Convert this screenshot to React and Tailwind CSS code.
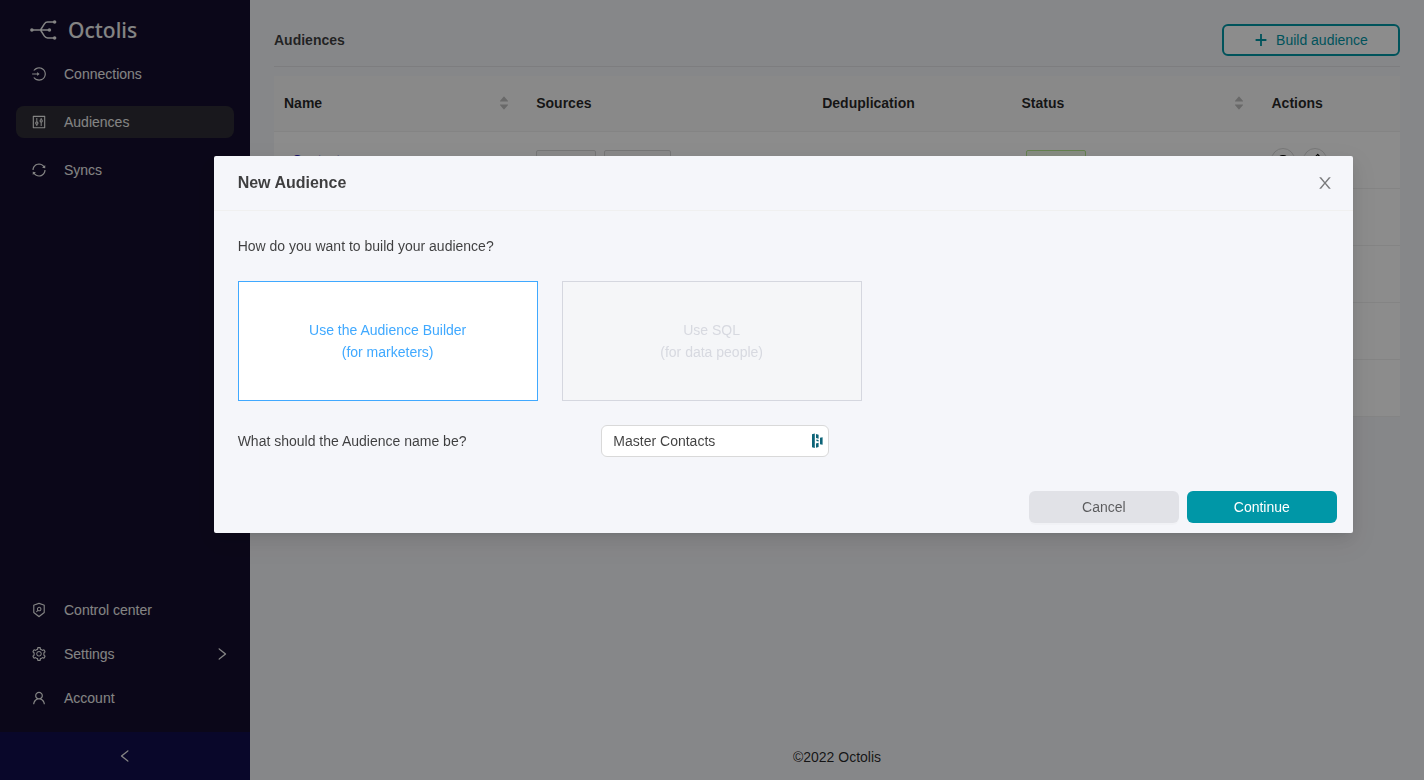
import React, { useState } from 'react';
import {
  AiFillCaretDown,
  AiFillCaretUp,
  AiOutlineControl,
  AiOutlineEdit,
  AiOutlineEye,
  AiOutlineLeft,
  AiOutlineLogin,
  AiOutlineRight,
  AiOutlineSecurityScan,
  AiOutlineSetting,
  AiOutlineSync,
  AiOutlineUser,
} from 'react-icons/ai';

const mainNav = [
  { label: 'Connections', icon: AiOutlineLogin },
  { label: 'Audiences', icon: AiOutlineControl, active: true },
  { label: 'Syncs', icon: AiOutlineSync },
];

const bottomNav = [
  { label: 'Control center', icon: AiOutlineSecurityScan },
  { label: 'Settings', icon: AiOutlineSetting, expandable: true },
  { label: 'Account', icon: AiOutlineUser },
];

const columns = [
  { title: 'Name', sortable: true, width: 'w-[22.4%]' },
  { title: 'Sources', width: 'w-[25.4%]' },
  { title: 'Deduplication', width: 'w-[17.7%]' },
  { title: 'Status', sortable: true, width: 'w-[22.2%]' },
  { title: 'Actions', width: 'w-[12.3%]' },
];

const Logo = () => (
  <div className="flex items-center gap-2.5 px-[30px] pt-3.5 text-[#f0f0f0]">
    <svg className="h-5 w-7" viewBox="0 0 28 20" fill="none" stroke="currentColor" strokeWidth="1.5" aria-hidden="true">
      <path d="M2 10H19M10.5 10L14.4 3.8Q15.6 2 17.6 2H25M10.5 10L14.4 16.2Q15.6 18 17.6 18H25" />
      <g fill="currentColor" stroke="none">
        <circle cx="1.9" cy="10" r="1.8" />
        <circle cx="19.4" cy="10" r="1.8" />
        <circle cx="24.6" cy="2" r="1.8" />
        <circle cx="24.6" cy="18" r="1.8" />
      </g>
    </svg>
    <span className="font-['Noto_Sans',sans-serif] text-[21px] leading-8 font-medium">Octolis</span>
  </div>
);

const NavItem = ({ label, icon: Icon, active = false, expandable = false }) => (
  <a
    href="#"
    className={`flex h-8 items-center gap-[17px] rounded-lg px-[15px] text-sm text-[#f0f0f0] ${active ? 'bg-[#2e2d35]' : ''}`}
  >
    <Icon className="size-4" aria-hidden="true" />
    <span className="flex-1">{label}</span>
    {expandable && <AiOutlineRight className="-mr-[11px] size-4" aria-hidden="true" />}
  </a>
);

const Sidebar = () => (
  <aside className="flex w-[250px] shrink-0 flex-col bg-[#150e2e]">
    <Logo />
    <nav className="mt-3 flex flex-1 flex-col gap-4 px-4">
      {mainNav.map((item) => (
        <NavItem key={item.label} {...item} />
      ))}
    </nav>
    <nav className="mb-[18px] flex flex-col gap-3 px-4">
      {bottomNav.map((item) => (
        <NavItem key={item.label} {...item} />
      ))}
    </nav>
    <button type="button" aria-label="Collapse menu" className="flex h-12 items-center justify-center bg-[#120d4d] text-[#f0f0f0]">
      <AiOutlineLeft className="size-4" />
    </button>
  </aside>
);

const PlusIcon = () => (
  <svg className="size-3.5" viewBox="0 0 14 14" stroke="currentColor" strokeWidth="1.8" aria-hidden="true">
    <path d="M7 1V13M1.6 7H12.4" />
  </svg>
);

const CloseIcon = () => (
  <svg className="size-4" viewBox="64 64 896 896" fill="currentColor" aria-hidden="true">
    <path d="M563.8 512l262.5-312.9c4.4-5.2.7-13.1-6.1-13.1h-79.8c-4.7 0-9.2 2.1-12.3 5.7L511.6 449.8 295.1 191.7c-3-3.6-7.5-5.7-12.3-5.7H203c-6.8 0-10.5 7.9-6.1 13.1L459.4 512 196.9 824.9A7.95 7.95 0 0 0 203 838h79.8c4.7 0 9.2-2.1 12.3-5.7l216.5-258.1 216.5 258.1c3 3.6 7.5 5.7 12.3 5.7h79.8c6.8 0 10.5-7.9 6.1-13.1L563.8 512z" />
  </svg>
);

const Sorter = () => (
  <span className="mr-1.5 flex flex-col text-[#bfbfbf]">
    <AiFillCaretUp className="size-3" />
    <AiFillCaretDown className="-mt-1 size-3" />
  </span>
);

const AudienceTable = () => (
  <table className="mt-[9px] w-full table-fixed bg-white text-sm">
    <thead>
      <tr className="h-[55px] border-b border-[#f0f0f0] bg-[#fafafa]">
        {columns.map(({ title, sortable, width }) => (
          <th key={title} className={`px-2.5 text-left font-bold text-black/85 ${width}`}>
            {sortable ? (
              <button type="button" className="flex w-full items-center justify-between">
                {title}
                <Sorter />
              </button>
            ) : (
              title
            )}
          </th>
        ))}
      </tr>
    </thead>
    <tbody>
      <tr className="h-[57px] border-b border-[#f0f0f0]">
        <td className="px-2.5">
          <a href="#" className="pl-2 text-[#2a22b8]">Contacts</a>
        </td>
        <td className="px-2.5">
          <div className="flex gap-2">
            <span className="h-5 w-[60px] rounded-xs border border-[#d9d9d9] bg-[#fafafa]" />
            <span className="h-5 w-[67px] rounded-xs border border-[#d9d9d9] bg-[#fafafa]" />
          </div>
        </td>
        <td />
        <td className="px-2.5">
          <div className="ml-1 h-5 w-[60px] rounded-xs border border-[#b7eb8f] bg-[#f6ffed]" />
        </td>
        <td className="px-2.5">
          <div className="flex gap-2">
            <button type="button" aria-label="View" className="flex size-6 items-center justify-center rounded-full border border-[#d9d9d9]">
              <AiOutlineEye className="size-4" />
            </button>
            <button type="button" aria-label="Edit" className="flex size-6 items-center justify-center rounded-full border border-[#d9d9d9]">
              <AiOutlineEdit className="size-4" />
            </button>
          </div>
        </td>
      </tr>
      {[1, 2, 3, 4].map((row) => (
        <tr key={row} className="h-[57px] border-b border-[#f0f0f0]">
          <td colSpan={5} />
        </tr>
      ))}
    </tbody>
  </table>
);

const PasswordManagerIcon = () => (
  <svg className="pointer-events-none absolute top-2 right-1.5 h-4 w-3" viewBox="0 0 12 16" fill="#0e6478" aria-hidden="true">
    <path d="M1 1.2L3.8 0.4V15L1 14.2ZM5 1L7.6 1.7V5.8L5 5ZM5.4 6.4L7.6 7V8.4L5.4 8ZM5 10.4L7.6 9.8V14L5 14.8ZM9 4.8L11.6 4.2V11.8L9 11.2Z" />
  </svg>
);

const NewAudienceModal = () => {
  const [name, setName] = useState('Master Contacts');

  return (
    <div className="fixed inset-0 flex items-start justify-end bg-black/45 pt-[20vh] pr-[5vw]">
      <div
        role="dialog"
        aria-labelledby="modal-title"
        className="w-[80vw] rounded-xs bg-[#f5f6fa] text-sm leading-[22px] text-black/75 shadow-[0_3px_6px_-4px_rgba(0,0,0,0.12),0_6px_16px_0_rgba(0,0,0,0.08),0_9px_28px_8px_rgba(0,0,0,0.05)]"
      >
        <header className="flex items-center justify-between border-b border-[#f0f0f0] px-6 py-4">
          <h2 id="modal-title" className="text-base leading-[22px] font-bold">New Audience</h2>
          <button type="button" aria-label="Close" className="-mr-1 text-black/50">
            <CloseIcon />
          </button>
        </header>

        <div className="flex flex-col gap-6 p-6">
          <p>How do you want to build your audience?</p>
          <div className="flex gap-6">
            <button type="button" className="h-[120px] w-[300px] border border-[#40a9ff] bg-white text-[#40a9ff]">
              Use the Audience Builder
              <br />
              (for marketers)
            </button>
            <button type="button" disabled className="h-[120px] w-[300px] border border-[#d5d7df] bg-[#f5f6f8] text-[#d7d9e0]">
              Use SQL
              <br />
              (for data people)
            </button>
          </div>
          <div className="flex items-center">
            <label htmlFor="audience-name" className="w-1/3">What should the Audience name be?</label>
            <div className="relative">
              <input
                id="audience-name"
                type="text"
                value={name}
                onChange={(e) => setName(e.target.value)}
                className="h-8 w-[228px] rounded-md border border-[#d9d9d9] bg-white px-[11px]"
              />
              <PasswordManagerIcon />
            </div>
          </div>
        </div>

        <footer className="flex justify-end gap-2 px-4 py-2.5">
          <button type="button" className="h-8 w-[150px] rounded-md bg-[#e1e2e7] text-black/60 shadow-[0_2px_0_rgba(0,0,0,0.015)]">
            Cancel
          </button>
          <button type="button" className="h-8 w-[150px] rounded-md bg-[#0097a7] text-white">
            Continue
          </button>
        </footer>
      </div>
    </div>
  );
};

const App = () => (
  <div className="flex min-h-screen bg-[#f5f6fa] font-['Liberation_Sans',Arial,sans-serif]">
    <Sidebar />
    <main className="flex min-w-0 flex-1 flex-col px-6 pt-6">
      <div className="flex items-center justify-between border-b border-[#e3e4e8] pb-2.5">
        <h1 className="text-sm font-bold text-black/75">Audiences</h1>
        <button
          type="button"
          className="flex h-8 w-[178px] items-center justify-center gap-2 rounded-md border-2 border-[#0097a7] bg-white text-sm text-[#0097a7]"
        >
          <PlusIcon />
          Build audience
        </button>
      </div>
      <AudienceTable />
      <footer className="mt-auto pb-3 text-center text-sm leading-[22px] text-black/85">©2022 Octolis</footer>
    </main>
    <NewAudienceModal />
  </div>
);

export default App;
